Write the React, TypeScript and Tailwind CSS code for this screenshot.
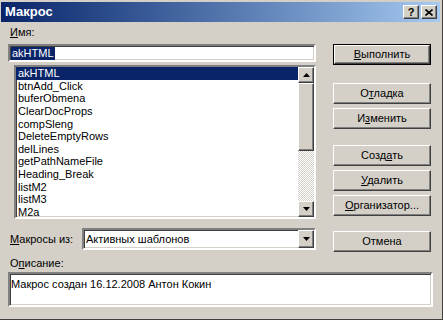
import React from 'react';

const macros = [
    'akHTML',
    'btnAdd_Click',
    'buferObmena',
    'ClearDocProps',
    'compSleng',
    'DeleteEmptyRows',
    'delLines',
    'getPathNameFile',
    'Heading_Break',
    'listM2',
    'listM3',
    'M2a',
];

const sunken =
    'border-2 border-t-[#808080] border-l-[#808080] border-r-white border-b-white shadow-[inset_1px_1px_0_#404040,inset_-1px_-1px_0_#d4d0c8]';
const raised =
    'border border-t-white border-l-white border-r-[#404040] border-b-[#404040] shadow-[inset_-1px_-1px_0_#808080]';

function Btn({ pre, u, post, def, className = '' }: { pre: string; u: string; post: string; def?: boolean; className?: string }) {
    const inner = (
        <div className={`h-full w-full bg-[#d4d0c8] flex items-center justify-center ${raised}`}>
            <span>
                {pre}
                <span className="underline underline-offset-1">{u}</span>
                {post}
            </span>
        </div>
    );
    return def ? (
        <div className={`h-[21px] w-[98px] border border-black ${className}`}>{inner}</div>
    ) : (
        <div className={`h-[21px] w-[98px] ${className}`}>{inner}</div>
    );
}

function Arrow({ down }: { down?: boolean }) {
    return (
        <svg width="7" height="4" viewBox="0 0 7 4">
            {down ? <path d="M0 0h7L3.5 4z" fill="#000" /> : <path d="M0 4h7L3.5 0z" fill="#000" />}
        </svg>
    );
}

export default function App() {
    return (
        <div
            className="w-[443px] h-[320px] bg-[#d4d0c8] flex flex-col pt-[2px] pl-[1px] pr-[2px] pb-[3px] border-r border-b border-r-[#404040] border-b-[#404040] text-[11px] text-black overflow-hidden"
            style={{ fontFamily: '"Liberation Sans", Arial, sans-serif' }}
        >
            {/* title bar */}
            <div className="h-[20px] flex items-center pl-[4px] pr-[3px] bg-gradient-to-r from-[#0a246a] to-[#a6caf0]">
                <span className="text-white font-bold text-[13px] flex-1">Макрос</span>
                <div className={`w-[16px] h-[14px] bg-[#d4d0c8] flex items-center justify-center font-bold text-[11px] ${raised}`}>?</div>
                <div className={`w-[16px] h-[14px] ml-[2px] bg-[#d4d0c8] flex items-center justify-center ${raised}`}>
                    <svg width="8" height="7" viewBox="0 0 8 7">
                        <path d="M0.5 0.5l7 6M7.5 0.5l-7 6" stroke="#000" strokeWidth="1.6" />
                    </svg>
                </div>
            </div>

            <div className="flex">
                {/* left column */}
                <div className="w-[308px] ml-[7px] flex flex-col">
                    <div className="mt-[4px] h-[13px] leading-[13px] pl-[2px]">
                        <span className="underline underline-offset-1">И</span>мя:
                    </div>
                    <div className={`mt-[5px] h-[18px] bg-white flex items-center pl-[1px] ${sunken}`}>
                        <span className="bg-[#0a246a] text-white leading-[13px] px-[1px]">akHTML</span>
                    </div>
                    <div className={`mt-[3px] ml-[6px] h-[154px] bg-white flex overflow-hidden ${sunken}`}>
                        <div className="flex-1 flex flex-col">
                            {macros.map((m, i) => (
                                <div
                                    key={m}
                                    className={`h-[12.65px] leading-[12.65px] pl-[2px] shrink-0 ${i === 0 ? 'bg-[#0a246a] text-white' : ''}`}
                                >
                                    {m}
                                </div>
                            ))}
                        </div>
                        <div className="w-[16px] flex flex-col">
                            <div className={`h-[16px] bg-[#d4d0c8] flex items-center justify-center ${raised}`}>
                                <Arrow />
                            </div>
                            <div className={`h-[68px] bg-[#d4d0c8] ${raised}`} />
                            <div className="flex-1 bg-[repeating-conic-gradient(#ffffff_0_25%,#d4d0c8_0_50%)] bg-[length:2px_2px]" />
                            <div className={`h-[16px] bg-[#d4d0c8] flex items-center justify-center ${raised}`}>
                                <Arrow down />
                            </div>
                        </div>
                    </div>
                    <div className="mt-[9px] flex items-center">
                        <div className="w-[74px] pl-[2px]">
                            <span className="underline underline-offset-1">М</span>акросы из:
                        </div>
                        <div className={`w-[234px] h-[22px] bg-white flex items-center ${sunken}`}>
                            <span className="flex-1 pl-[2px]">Активных шаблонов</span>
                            <div className={`w-[16px] h-full bg-[#d4d0c8] flex items-center justify-center ${raised}`}>
                                <Arrow down />
                            </div>
                        </div>
                    </div>
                </div>

                {/* right column */}
                <div className="ml-[17px] flex flex-col">
                    <Btn pre="" u="В" post="ыполнить" def className="mt-[22px]" />
                    <Btn pre="О" u="т" post="ладка" className="mt-[18px]" />
                    <Btn pre="И" u="з" post="менить" className="mt-[4px]" />
                    <Btn pre="Созд" u="а" post="ть" className="mt-[16px]" />
                    <Btn pre="" u="У" post="далить" className="mt-[4px]" />
                    <Btn pre="" u="О" post="рганизатор..." className="mt-[4px]" />
                    <Btn pre="" u="" post="Отмена" className="mt-[15px]" />
                </div>
            </div>

            {/* description */}
            <div className="ml-[7px] mt-[5px] h-[13px] leading-[13px] pl-[2px]">
                О<span className="underline underline-offset-1">п</span>исание:
            </div>
            <div className={`ml-[7px] mt-[2px] w-[425px] h-[35px] bg-white pl-[1px] pt-[2px] ${sunken}`}>
                Макрос создан 16.12.2008 Антон Кокин
            </div>
        </div>
    );
}
